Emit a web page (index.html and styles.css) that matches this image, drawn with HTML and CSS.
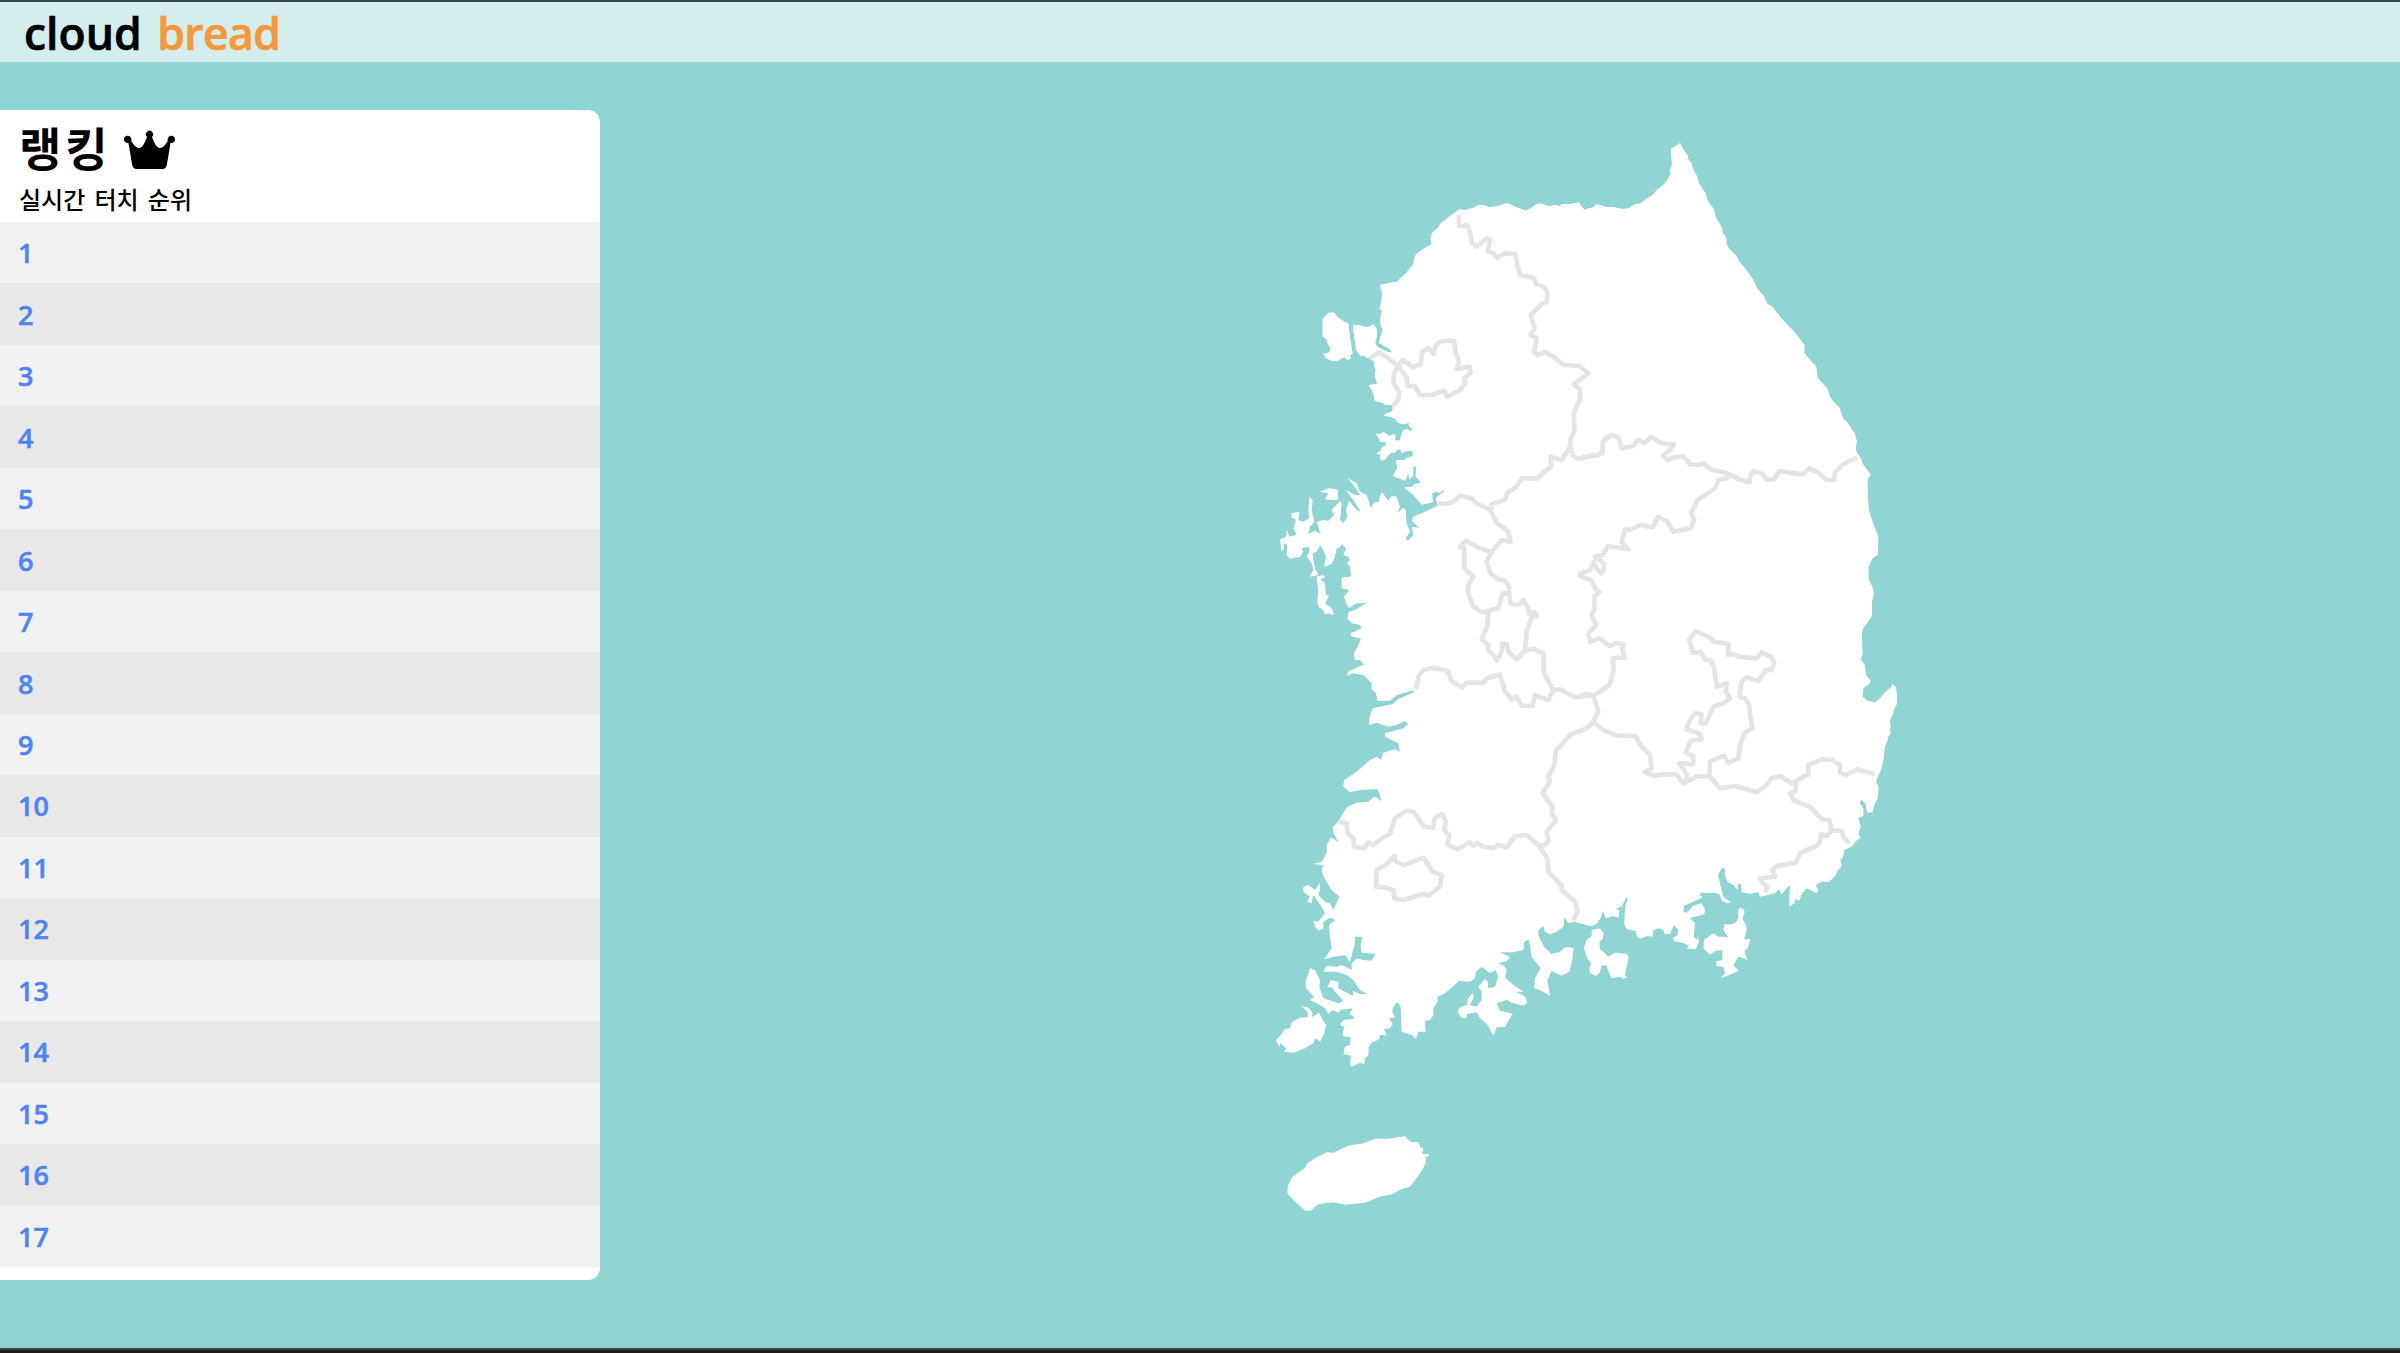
FILE: index.html
```html
<!DOCTYPE html>
<html lang="ko">
<head>
<meta charset="utf-8">
<title>cloud bread</title>
<link rel="stylesheet" href="styles.css">
</head>
<body>
<header class="header"><h1 class="logo">cloud <span class="logo-accent">bread</span></h1></header>
<main class="main">
<section class="ranking">
<div class="ranking-head">
<h2 class="ranking-title"><span class="ranking-name">랭킹</span>
<svg class="crown" viewBox="0 0 51 39"><path d="M8 34 L4.5 13 A3.7 3.7 0 1 1 7.2 10.5 C10 16 12.500 18 15.500 18 C19 17.500 21 12 23 7 A3.600 3.600 0 1 1 28 7 C30 12 32 17.500 35.500 18 C38.500 18 41 16 43.800 10.500 A3.700 3.700 0 1 1 46.500 13 L43 34 Q42.300 39 38.500 39 H12.500 Q8.700 39 8 34Z"/></svg>
</h2>
<p class="ranking-sub">실시간 터치 순위</p>
</div>
<ol class="ranking-list">
<li>1</li><li>2</li><li>3</li><li>4</li><li>5</li><li>6</li><li>7</li><li>8</li><li>9</li><li>10</li><li>11</li><li>12</li><li>13</li><li>14</li><li>15</li><li>16</li><li>17</li>
</ol>
</section>
<div class="map-area">
<svg class="map" viewBox="1260 130 670 1090">
<g class="land">
<path transform="translate(1260 130) scale(.33333)" d="M1050 232 1030 230 1008 223 1002 232 988 234 974 240 966 230 957 217 945 220 930 222 905 222 900 229 888 225 865 228 842 220 828 223 812 234 797 242 785 237 768 231 750 222 737 220 722 226 708 229 695 230 685 232 675 226 655 225 640 233 615 240 598 238 585 247 565 262 542 280 535 292 515 310 511 328 515 342 490 356 468 373 463 382 458 405 440 427 425 441 411 455 400 456 385 460 367 463 360 465 366 490 364 515 358 538 365 540 361 560 361 585 368 600 361 620 357 638 375 650 390 658 396 667 385 667 365 657 350 648 346 635 351 620 350 595 341 583 328 589 318 591 300 586 280 584 279 600 284 630 288 660 302 678 315 677 317 684 328 682 343 696 342 708 347 718 345 740 351 762 335 763 325 766 335 780 341 795 342 810 350 815 368 818 377 826 392 824 398 830 397 843 375 852 372 858 392 860 405 866 412 877 425 883 440 882 447 877 446 887 457 898 453 904 440 897 430 900 424 912 420 930 411 932 405 930 407 915 398 912 390 918 370 906 360 912 347 911 357 925 360 935 375 937 379 945 365 952 362 962 349 970 360 975 360 988 370 992 380 985 385 975 395 968 405 968 413 958 422 960 424 970 445 962 458 964 458 978 440 983 430 994 413 994 408 1002 1050 1002Z M187 568 205 548 222 547 232 560 250 573 266 581 268 605 273 640 278 670 270 678 273 686 262 690 255 683 245 684 235 692 215 692 200 686 190 672 205 668 212 658 205 645 200 630 187 618Z"/>
<path transform="translate(1580 130) scale(.33333)" d="M0 230 12 240 22 236 38 233 48 223 62 226 82 232 95 230 115 234 130 237 148 234 165 221 180 221 200 206 218 194 230 180 252 163 264 147 271 130 270 120 276 105 274 80 273 56 287 47 300 39 310 58 323 76 325 88 335 100 339 116 353 142 356 158 378 192 383 212 402 238 407 260 427 294 429 310 438 322 441 347 452 360 469 377 477 394 497 416 522 452 531 474 550 496 563 522 577 530 604 565 640 602 674 644 673 668 682 680 709 710 714 745 743 777 750 800 762 817 778 832 789 865 803 878 824 910 830 930 827 965 838 982 845 1000 0 1000Z"/>
<path transform="translate(1260 460) scale(.33333)" d="M408 0 412 25 398 48 415 55 435 62 445 40 448 60 460 45 460 20 468 20 467 50 483 68 465 72 455 80 432 82 460 105 485 134 520 127 516 100 530 95 541 98 552 88 550 97 535 107 527 115 533 138 495 155 460 170 455 182 478 203 455 200 460 225 443 243 437 235 450 215 440 190 437 150 430 143 413 158 420 140 410 110 395 107 385 122 365 95 355 125 340 130 333 145 320 105 300 95 290 70 263 55 285 80 300 105 285 105 257 90 280 120 302 155 290 150 267 122 258 150 262 170 250 190 240 180 245 130 235 120 233 88 205 85 178 95 205 100 195 118 220 120 235 118 238 125 215 150 222 165 205 182 190 180 170 185 182 222 165 212 145 222 150 200 163 185 155 150 158 120 148 112 145 150 148 175 130 185 115 180 118 155 95 160 95 172 108 180 100 205 110 225 90 230 80 210 78 230 60 238 65 275 72 265 72 250 82 255 80 285 90 296 120 290 130 275 125 265 145 260 150 270 140 290 155 310 160 330 150 350 175 345 165 325 160 300 158 280 170 275 180 255 190 270 198 290 192 320 215 312 225 290 230 265 240 262 245 252 258 265 250 285 265 290 270 300 260 310 270 320 273 350 245 352 245 385 268 390 252 410 265 445 290 430 320 428 285 450 267 455 262 475 275 490 300 495 305 505 272 520 275 530 303 535 295 555 282 580 285 600 300 600 312 615 300 618 265 635 260 648 280 640 310 645 335 670 335 688 348 700 352 722 390 722 410 705 463 690 460 697 410 720 400 732 338 745 327 775 328 795 350 788 385 800 410 795 435 783 445 792 430 805 375 820 375 830 415 850 420 875 405 868 370 878 363 900 350 890 330 900 290 935 252 960 250 980 270 997 300 990 352 987 358 1000 365 1025 1050 1025 1050 0Z M170 350 190 345 195 352 182 358 195 370 197 402 207 408 195 430 215 445 222 465 205 460 195 463 190 450 175 440 172 420 175 395Z"/>
<path transform="translate(1580 440) scale(.33333)" d="M0 0H830L827 30 845 60 848 72 872 103 863 120 864 180 868 215 880 252 895 288 893 345 878 355 865 382 867 420 877 440 882 462 876 485 876 528 850 565 845 580 848 640 843 660 855 675 858 705 872 722 868 732 850 745 848 770 862 782 885 787 895 780 918 754 932 744 938 732 948 742 951 765 950 794 942 808 938 825 930 840 932 860 930 868 932 880 924 892 922 905 0 905Z M0 900V1100H840V900Z"/>
<path transform="translate(1560 740) scale(.33333)" d="M983 -4 975 20 970 60 965 85 950 118 950 130 956 140 953 175 945 190 938 216 922 218 916 190 905 180 898 188 910 205 910 228 895 233 902 260 895 283 902 293 885 305 878 318 853 330 848 355 841 360 845 378 830 395 828 405 808 425 785 425 767 435 775 450 770 459 755 452 740 445 725 462 718 482 706 476 703 490 688 500 689 435 680 445 665 463 657 448 645 460 600 470 595 456 570 461 545 457 543 432 533 433 533 450 520 435 502 425 495 405 494 385 485 385 474 405 480 430 485 450 490 470 512 487 500 489 487 484 478 463 462 458 440 460 425 457 418 465 428 472 400 485 372 497 370 516 380 518 400 497 425 489 435 510 433 523 405 530 390 535 405 548 401 590 411 600 412 588 417 605 408 627 380 626 388 617 370 608 345 605 337 595 352 586 355 570 342 556 330 582 315 582 310 570 295 565 280 570 278 590 262 588 240 596 230 587 228 573 200 568 193 553 195 500 204 475 198 473 185 500 168 505 178 512 176 533 160 528 138 535 128 512 124 530 110 552 90 558 70 552 45 546 40 546 40 -4Z M95 570 120 565 131 580 128 597 118 605 120 628 135 640 145 650 165 638 200 642 206 650 200 680 195 705 200 712 190 717 180 710 155 715 148 700 138 675 125 678 118 700 108 708 90 700 88 685 93 672 80 650 72 625 80 600 95 588Z M540 502 553 510 553 522 547 535 560 560 558 580 553 598 571 598 563 625 553 632 562 660 550 655 535 650 520 675 535 692 520 700 500 708 483 713 495 700 490 682 470 678 467 665 487 660 487 630 467 632 450 645 430 625 432 600 460 580 475 590 490 590 505 592 490 570 493 553 515 553 530 545 535 530 535 510Z"/>
<path transform="translate(1260 790) scale(.33333)" d="M357 0H1000V408L971 403 965 400 940 395 925 400 913 382 910 410 890 425 870 433 855 425 850 408 835 420 835 435 852 470 875 492 900 485 915 472 941 473 937 510 928 545 905 557 875 543 862 570 870 617 850 605 823 595 825 565 842 535 815 500 812 480 806 448 793 455 790 480 760 487 722 487 750 502 740 513 715 520 735 530 740 540 735 562 760 585 790 605 770 605 795 620 802 638 790 647 755 638 740 630 710 640 720 663 758 670 735 710 710 712 702 735 695 728 683 705 660 685 650 667 620 672 620 684 605 684 593 665 600 652 620 645 625 625 640 607 640 625 630 645 650 650 665 630 665 605 655 590 675 567 683 575 685 595 705 590 715 560 707 540 690 550 665 530 648 545 645 565 630 575 597 573 570 597 550 613 532 620 533 635 520 655 520 675 510 690 495 692 497 725 475 725 468 746 455 735 425 725 422 650 412 636 400 650 397 665 405 682 387 685 398 703 390 715 372 717 380 736 360 735 357 748 335 758 326 770 325 795 315 805 313 822 300 818 275 830 270 820 273 797 250 792 255 770 270 765 272 742 248 738 252 710 240 705 250 690 280 687 282 680 268 672 278 655 240 660 238 668 215 660 205 672 195 655 180 645 150 630 162 620 138 595 137 575 150 535 165 540 180 570 178 590 190 625 235 640 250 633 230 610 215 592 202 592 212 570 235 575 235 595 255 605 280 618 278 603 300 612 323 613 300 600 280 570 260 555 230 545 190 545 200 528 230 530 245 525 275 540 275 520 290 505 310 510 335 512 346 492 305 488 302 465 307 440 285 440 285 460 270 515 255 495 220 500 192 508 215 475 210 440 207 405 227 390 210 383 190 395 190 415 175 422 165 410 160 392 175 395 195 370 185 350 160 315 155 340 140 335 150 320 130 305 130 290 145 285 165 300 180 278 180 300 175 315 195 335 210 340 220 360 238 320 215 300 190 258 185 240 190 225 160 222 185 215 200 190 200 165 213 142 235 157 219 125 220 110 235 93 262 50 290 38 325 35 340 22 350 22 365 35Z M125 648 145 653 158 668 155 682 178 668 185 685 198 705 193 730 180 755 165 745 160 760 135 775 100 788 72 785 78 775 60 758 58 772 48 750 62 735 75 717 90 715 95 697 120 683 143 682 143 665Z M83 1190 95 1163 135 1133 142 1120 167 1103 200 1087 220 1088 265 1067 310 1060 345 1046 385 1046 435 1039 452 1056 476 1057 480 1072 490 1075 487 1092 507 1092 505 1100 497 1100 497 1120 485 1143 450 1190 425 1197 395 1213 360 1220 315 1238 255 1244 220 1237 175 1243 152 1262 136 1262 100 1230 82 1210Z"/>
</g>
<g class="borders">
<path transform="translate(1260 130) scale(.33333)" d="M597 255 597 287 606 288 622 285 632 315 636 340 650 350 665 338 680 325 690 328 684 362 700 370 712 383 735 370 767 373 772 405 780 435 822 445 828 462 850 470 862 485 860 515 845 522 812 555 824 595 812 615 830 625 822 665 833 676 855 666 880 680 912 705 960 708 985 730 965 745 942 763 960 780 960 808 942 848 943 905 932 925 930 950 940 978 955 987 1010 975 1028 970 1028 935 1050 918 M930 950 905 990 872 980 873 1010 850 1028 833 1045 M415 708 428 690 458 711 482 703 487 665 505 655 520 672 528 645 545 633 582 633 586 665 597 695 590 717 628 710 632 728 612 745 617 758 600 780 562 800 552 782 515 795 480 795 465 768 443 768 440 742 415 708 M330 687 355 666 385 685 415 708 402 730 400 760 418 785 415 808 398 830"/>
<path transform="translate(1580 130) scale(.33333)" d="M0 985 40 975 50 977 68 965 68 935 80 922 95 915 115 922 125 955 160 948 175 930 192 940 213 920 235 935 255 942 282 942 270 960 248 978 265 990 280 982 312 980 330 1003 352 1005 370 1000 390 1018 435 1028 475 1044"/>
<path transform="translate(1260 460) scale(.33333)" d="M850 38 833 55 785 55 770 80 742 98 735 120 695 132 695 150 M535 130 555 132 580 125 600 107 635 115 650 130 690 150 712 190 745 215 752 245 725 240 695 275 680 305 692 340 715 358 735 362 747 380 747 400 728 400 715 445 665 457 638 438 625 400 625 375 640 350 613 325 613 265 600 262 618 242 660 265 692 275 M685 455 682 500 665 538 685 555 685 572 697 580 710 602 725 575 727 550 740 552 745 575 770 598 795 572 800 515 815 472 830 468 822 455 808 462 805 445 790 420 780 433 752 432 747 400 M795 572 820 566 850 580 852 640 880 690 900 688 945 712 1000 705 M468 688 475 650 490 630 520 623 565 633 573 662 605 683 620 668 670 668 680 655 720 643 735 695 755 718 770 710 785 737 818 738 825 705 865 720 880 690 M1003 785 980 805 930 825 888 872 883 915 865 950 870 963 848 1000 880 1045"/>
<path transform="translate(1580 440) scale(.33333)" d="M435 98 475 118 508 127 512 105 520 93 548 102 560 118 582 118 598 93 668 103 687 85 715 98 740 120 762 120 765 98 790 72 832 52 M448 112 415 120 405 145 355 178 332 220 343 238 332 265 280 275 262 245 235 230 218 262 180 255 150 270 135 268 125 305 145 328 110 322 85 318 68 345 45 350 72 370 72 385 65 400 50 385 42 365 30 390 0 402 0 408 35 422 45 445 58 457 43 470 43 510 35 525 48 555 25 580 30 605 58 595 90 618 108 610 130 612 127 630 135 652 98 655 102 690 88 735 40 768 55 815 40 845 70 870 110 887 165 888 185 920 210 945 215 985 195 997 225 1007 250 1003 290 1003 310 1030 350 1010 388 1008 420 1045 465 1038 530 1057 555 1040 575 1015 600 1008 635 1030 685 1003 685 975 725 958 755 960 780 975 780 998 797 1005 832 988 883 1002 M40 768 20 762 -6 770 M388 1008 390 965 432 947 445 968 475 955 480 915 495 878 517 865 510 825 508 795 495 775 478 770 485 725 500 712 535 722 558 690 575 690 583 670 572 650 545 637 530 655 475 650 460 642 445 645 445 612 400 605 395 595 348 573 327 600 340 640 362 635 375 660 390 660 402 680 410 740 440 730 438 755 450 775 430 790 400 800 378 850 362 848 365 822 345 820 330 840 318 868 360 882 365 898 332 902 318 938 340 950 340 972 298 970 320 1003 318 1022"/>
<path transform="translate(1560 740) scale(.33333)" d="M708 127 707 152 690 160 700 180 755 203 775 228 790 238 808 240 815 272 845 272 850 290 868 310 M815 272 800 288 783 282 780 305 770 318 745 328 720 340 707 368 650 378 638 390 645 410 600 415 607 428 622 440 615 457"/>
<path transform="translate(1260 790) scale(.33333)" d="M235 95 260 100 263 130 280 145 282 170 313 175 325 158 340 165 365 145 390 132 405 85 440 62 460 65 475 85 490 108 518 115 525 85 545 72 558 95 552 120 568 135 562 163 593 178 630 157 640 167 650 158 670 170 700 175 715 165 740 172 765 138 800 135 838 168 855 165 865 150 860 125 888 90 875 70 878 50 848 10 M838 168 862 205 866 248 905 285 905 300 945 335 953 365 940 390 M350 240 380 222 405 198 405 212 430 226 490 203 518 245 545 255 540 290 505 318 490 312 430 330 403 325 400 300 370 292 348 290Z"/>
</g>
</svg>
</div>
</main>
</body>
</html>
```
FILE: styles.css
```css
* { box-sizing: border-box; }
body {
  margin: 0;
  height: 1353px;
  display: flex;
  flex-direction: column;
  overflow: hidden;
  background: #90d4d4;
  border-top: 2px solid #434a4a;
  font-family: "Open Sans", "Noto Sans CJK KR", sans-serif;
}
body::after {
  content: "";
  height: 3px;
  flex: none;
  background: #1c1c1c;
  border-top: 2px solid #404646;
}
h1, h2, p, ol { margin: 0; padding: 0; }
.header {
  height: 60px;
  flex: none;
  display: flex;
  align-items: center;
  padding: 2px 0 0 24px;
  background: #d3eeed;
}
.logo {
  font-size: 44.5px;
  line-height: 58px;
  font-weight: 600;
  word-spacing: 4px;
  -webkit-text-stroke: 0.7px currentColor;
}
.logo-accent {
  color: #f5983c;
  letter-spacing: -0.6px;
}
.main {
  flex: 1;
  display: flex;
  padding-top: 48px;
}
.ranking {
  width: 600px;
  height: 1170px;
  flex: none;
  background: #fff;
  border-radius: 0 12px 12px 0;
}
.ranking-head { height: 112px; padding: 9px 0 0 19px; }
.ranking-title {
  display: flex;
  align-items: center;
  gap: 12px;
  height: 60px;
  font: 700 46px/60px "Noto Sans CJK KR", sans-serif;
}
.ranking-name {
  padding-bottom: 6px;
  letter-spacing: 4px;
}
.crown { width: 51px; height: 39px; }
.ranking-sub {
  font: 500 24px/40px "Noto Sans CJK KR", sans-serif;
  word-spacing: 2.5px;
}
.ranking-list {
  height: 1045px;
  display: grid;
  grid-template-rows: repeat(17, 1fr);
  list-style: none;
}
.ranking-list li {
  display: flex;
  align-items: center;
  padding-left: 18px;
  font-size: 27px;
  font-weight: 600;
  -webkit-text-stroke: 0.5px currentColor;
  color: #4e84f0;
  background: #f1f1f1;
}
.ranking-list li:nth-child(even) { background: #e8e8e8; }
.map-area {
  flex: 1;
  display: flex;
  justify-content: center;
  padding: 20px 0 0 190px;
}
.map { width: 670px; height: 1090px; flex: none; }
.land { fill: #fff; }
.borders {
  fill: none;
  stroke: #e4e4e4;
  stroke-width: 14px;
  stroke-linejoin: round;
}
```
